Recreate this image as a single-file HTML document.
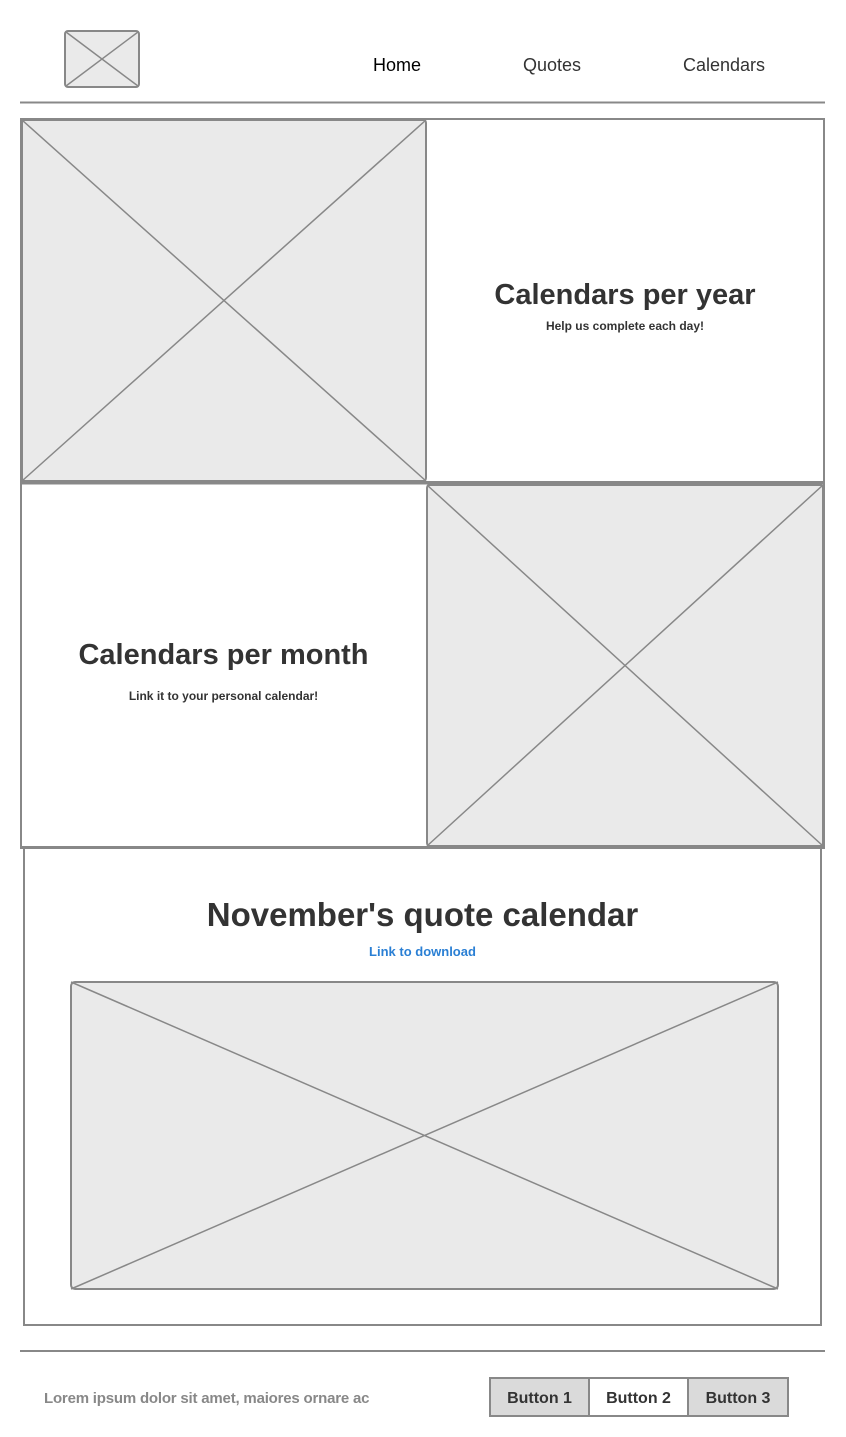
<!DOCTYPE html>
<html><head><meta charset="utf-8"><style>
html,body{margin:0;padding:0;background:#fff;width:846px;height:1437px;overflow:hidden;position:relative;font-family:"Liberation Sans","DejaVu Sans",sans-serif}
.t{position:absolute;white-space:nowrap;text-align:center}
</style></head><body>
<svg width="846" height="1437" style="position:absolute;left:0;top:0" xmlns="http://www.w3.org/2000/svg">
<g stroke="#888" fill="none">
<rect x="65" y="31" width="74" height="56" rx="3" fill="#eaeaea" stroke-width="2"/>
<path d="M66 32L138 86M138 32L66 86" stroke-width="1.5"/>
<line x1="20" y1="102.5" x2="825" y2="102.5" stroke-width="2"/>
<rect x="21" y="119" width="803" height="363" stroke-width="2"/>
<rect x="22" y="120" width="404" height="361" rx="3" fill="#eaeaea" stroke-width="2"/>
<path d="M22 120L426 481M426 120L22 481" stroke-width="1.5"/>
<rect x="21" y="483" width="803" height="364" stroke-width="2"/>
<line x1="20" y1="483" x2="825" y2="483" stroke-width="3"/>
<rect x="427" y="485" width="396" height="361" rx="3" fill="#eaeaea" stroke-width="2"/>
<path d="M427 485L823 846M823 485L427 846" stroke-width="1.5"/>
<line x1="20" y1="847.5" x2="825" y2="847.5" stroke-width="3"/>
<rect x="24" y="848" width="797" height="477" stroke-width="2"/>
<rect x="71" y="982" width="707" height="307" rx="4" fill="#eaeaea" stroke-width="2"/>
<path d="M71 982L778 1289M778 982L71 1289" stroke-width="1.5"/>
<line x1="20" y1="1351" x2="825" y2="1351" stroke-width="2"/>
<rect x="490" y="1378" width="99" height="38" fill="#dadada" stroke-width="2"/>
<rect x="589" y="1378" width="99" height="38" fill="#fff" stroke-width="2"/>
<rect x="688" y="1378" width="100" height="38" fill="#dadada" stroke-width="2"/>
</g>
</svg>
<div class="t" style="left:373px;top:55px;font-size:18px;color:#000">Home</div>
<div class="t" style="left:523px;top:55px;font-size:18px;color:#333">Quotes</div>
<div class="t" style="left:683px;top:55px;font-size:18px;color:#333">Calendars</div>
<div class="t" style="left:426px;width:398px;top:279px;font-size:29px;font-weight:bold;color:#333">Calendars per year</div>
<div class="t" style="left:426px;width:398px;top:319px;font-size:12px;font-weight:bold;color:#333">Help us complete each day!</div>
<div class="t" style="left:21px;width:405px;top:639px;font-size:29px;font-weight:bold;color:#333">Calendars per month</div>
<div class="t" style="left:21px;width:405px;top:689px;font-size:12px;font-weight:bold;color:#333">Link it to your personal calendar!</div>
<div class="t" style="left:24px;width:797px;top:896px;font-size:33px;font-weight:bold;color:#333">November's quote calendar</div>
<div class="t" style="left:24px;width:797px;top:944px;font-size:13px;font-weight:bold;color:#2a7fd4">Link to download</div>
<div class="t" style="left:44px;top:1390px;font-size:15px;font-weight:bold;color:#888;text-align:left;letter-spacing:-0.2px">Lorem ipsum dolor sit amet, maiores ornare ac</div>
<div class="t" style="left:490px;width:99px;top:1390px;font-size:16px;font-weight:bold;color:#333">Button 1</div>
<div class="t" style="left:589px;width:99px;top:1390px;font-size:16px;font-weight:bold;color:#333">Button 2</div>
<div class="t" style="left:688px;width:100px;top:1390px;font-size:16px;font-weight:bold;color:#333">Button 3</div>
</body></html>
